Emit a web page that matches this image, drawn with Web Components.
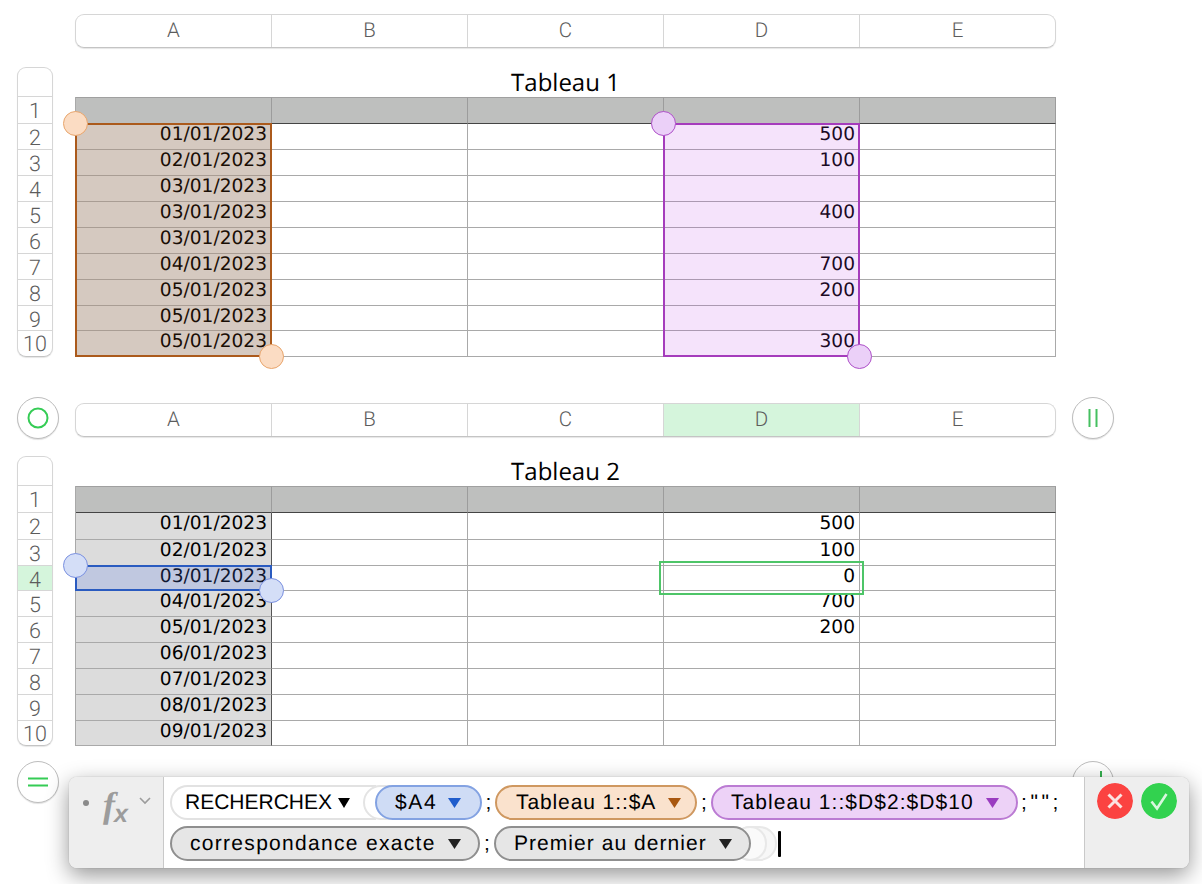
<!DOCTYPE html>
<html lang="fr">
<head>
<meta charset="utf-8">
<title>Tableau</title>
<style>
  html, body { margin: 0; padding: 0; background: #fff; }
  body { width: 1202px; height: 884px; overflow: hidden; text-rendering: geometricPrecision; }
</style>
</head>
<body>
<sheet-page></sheet-page>

<script>
const GREEN_TINT = "#d5f5dc";
const ROWS_1 = [27, 26, 26, 26, 26, 26, 26, 26, 25, 26];
const ROWS_2 = [27, 27, 26, 25, 26, 26, 26, 26, 26, 25];

class ColHeader extends HTMLElement {
  constructor() {
    super();
    this.attachShadow({ mode: "open" });
    const active = this.getAttribute("active");
    const cells = ["A", "B", "C", "D", "E"]
      .map((c) => `<div class="cell ${c === active ? "on" : ""}">${c}</div>`)
      .join("");
    this.shadowRoot.innerHTML = `
      <style>
        :host { display: block; height: 34px; }
        .bar {
          display: grid;
          grid-template-columns: 196px 196px 196px 196px 1fr;
          height: 100%;
          box-sizing: border-box;
          border: 1px solid #d6d6d6;
          border-bottom-color: #c4c4c4;
          border-radius: 9px;
          overflow: hidden;
          box-shadow: 0 1px 1px rgba(0,0,0,0.1);
          background: #fff;
        }
        .cell {
          font: 300 20.5px/33px Roboto, "Liberation Sans", sans-serif;
          color: #5c5c5c;
          text-align: center;
          border-right: 1px solid #d6d6d6;
        }
        .cell:last-child { border-right: 0; }
        .on { background: ${GREEN_TINT}; }
      </style>
      <div class="bar">${cells}</div>
    `;
  }
}

class RowHeader extends HTMLElement {
  constructor() {
    super();
    this.attachShadow({ mode: "open" });
    const active = Number(this.getAttribute("active"));
    const rows = JSON.parse(this.getAttribute("rows"));
    // the box border takes the last pixel, so the last row is one shorter
    const cells = rows
      .map((h, i) => {
        const height = i === rows.length - 1 ? h - 1 : h;
        return `<div class="row ${i + 1 === active ? "on" : ""}" style="height:${height}px">${i + 1}</div>`;
      })
      .join("");
    this.shadowRoot.innerHTML = `
      <style>
        :host { display: block; width: 36px; }
        .box {
          box-sizing: border-box;
          height: 290px;
          border: 1px solid #d6d6d6;
          border-bottom-color: #c4c4c4;
          border-radius: 9px;
          overflow: hidden;
          box-shadow: 0 1px 1px rgba(0,0,0,0.1);
          background: #fff;
        }
        .blank { height: 28px; border-bottom: 1px solid #d6d6d6; }
        .row {
          box-sizing: border-box;
          padding-top: 4px;
          font: 300 21.5px/21px Roboto, "Liberation Sans", sans-serif;
          color: #5c5c5c;
          text-align: center;
          border-bottom: 1px solid #d6d6d6;
        }
        .row:last-child { border-bottom: 0; padding-top: 3px; }
        .on { background: ${GREEN_TINT}; }
      </style>
      <div class="box"><div class="blank"></div>${cells}</div>
    `;
  }
}

class SheetTable extends HTMLElement {
  constructor() {
    super();
    this.attachShadow({ mode: "open" });
    const rows = JSON.parse(this.getAttribute("rows"));
    const colA = JSON.parse(this.getAttribute("col-a"));
    const colD = JSON.parse(this.getAttribute("col-d"));
    let cells = "";
    rows.forEach((h, r) => {
      for (let c = 0; c < 5; c++) {
        let text = "";
        let cls = r === 0 ? "cell head" : "cell";
        if (r > 0 && c === 0) { text = colA[r - 1] || ""; cls += " shade"; }
        if (r > 0 && c === 3) { text = colD[r - 1] || ""; }
        cells += `<div class="${cls}" style="height:${h}px">${text}</div>`;
      }
    });
    this.shadowRoot.innerHTML = `
      <style>
        :host { display: block; position: relative; height: 290px; }
        .title {
          height: 30px;
          padding-top: 1px;
          box-sizing: border-box;
          font: 24px/29px "Open Sans", sans-serif;
          color: #000;
          text-align: center;
          white-space: nowrap;
        }
        .grid {
          display: grid;
          grid-template-columns: repeat(5, 196px);
          width: 981px;
          box-sizing: border-box;
          border-left: 1px solid #a9a9a9;
        }
        .cell {
          box-sizing: border-box;
          border-right: 1px solid #a9a9a9;
          border-bottom: 1px solid #a9a9a9;
          padding-right: 4px;
          text-align: right;
          font: 18.6px/21px "DejaVu Sans", sans-serif;
          color: #000;
          white-space: nowrap;
        }
        .head {
          background: #bebfbe;
          border-top: 1px solid #a0a0a0;
          border-right-color: #9c9c9c;
          border-bottom-color: #444;
        }
        .shade { background: #dcdcdc; border-right-color: var(--shade-line, #a9a9a9); }
      </style>
      <div class="title">${this.getAttribute("name")}</div>
      <div class="grid">${cells}</div>
      <slot></slot>
    `;
  }
}

// colored range laid over the cells, with optional round handles
class RangeMark extends HTMLElement {
  constructor() {
    super();
    this.attachShadow({ mode: "open" });
    const handles = this.hasAttribute("handles")
      ? `<i class="h tl"></i><i class="h br"></i>` : "";
    this.shadowRoot.innerHTML = `
      <style>
        :host {
          position: absolute;
          box-sizing: border-box;
          border: 2px solid var(--line);
          background: var(--fill);
        }
        .h {
          position: absolute;
          box-sizing: border-box;
          width: 25px;
          height: 25px;
          border-radius: 50%;
          border: 1.5px solid var(--knob-line);
          background: var(--knob);
        }
        .tl { left: -14px; top: -14px; }
        .br { right: -14px; bottom: -14px; }
      </style>
      ${handles}
    `;
  }
}

class RoundBtn extends HTMLElement {
  constructor() {
    super();
    this.attachShadow({ mode: "open" });
    const icons = {
      circle: `<circle cx="21" cy="21" r="9.5" fill="none" stroke="#35cc55" stroke-width="2"/>`,
      bars: `<path d="M17.5 12v18M24.5 12v18" stroke="#45c060" stroke-width="2" fill="none"/>`,
      equal: `<path d="M11 17.5h20M11 24.5h20" stroke="#35cc55" stroke-width="2" fill="none"/>`,
      plus: `<path d="M29 10v8" stroke="#35b050" stroke-width="2" fill="none"/>`
    };
    this.shadowRoot.innerHTML = `
      <style>
        :host { display: block; width: 42px; height: 42px; }
        .b {
          box-sizing: border-box;
          width: 42px;
          height: 42px;
          border: 1px solid #bdbdbd;
          border-radius: 50%;
          background: #fff;
          box-shadow: 0 1px 1px rgba(0,0,0,0.12);
        }
        svg { display: block; margin: -1px; }
      </style>
      <div class="b"><svg width="42" height="42" viewBox="0 0 42 42">${icons[this.getAttribute("icon")]}</svg></div>
    `;
  }
}

class FormulaToken extends HTMLElement {
  constructor() {
    super();
    this.attachShadow({ mode: "open" });
    const tones = {
      blue: ["#cfdcf5", "#83a2e2", "#1f5ccc"],
      orange: ["#fae2cd", "#cf9860", "#a8570f"],
      purple: ["#edd2f7", "#bb7bd3", "#9a3cc0"],
      gray: ["#e6e6e6", "#8f8f8f", "#222"]
    };
    const t = tones[this.getAttribute("tone")];
    this.shadowRoot.innerHTML = `
      <style>
        :host {
          display: flex;
          align-items: center;
          box-sizing: border-box;
          height: 35px;
          position: relative;
          flex: none;
          background: ${t[0]};
          border: 2px solid ${t[1]};
          border-radius: 18px;
          font: 21px/31px "Liberation Sans", sans-serif;
          letter-spacing: 1px;
          color: #000;
          white-space: nowrap;
        }
        svg { display: block; flex: none; }
      </style>
      <slot></slot>
      <svg width="13" height="10" viewBox="0 0 13 10"><path d="M0 0h13L6.5 10z" fill="${t[2]}"/></svg>
    `;
  }
}

class FormulaBar extends HTMLElement {
  constructor() {
    super();
    this.attachShadow({ mode: "open" });
    this.shadowRoot.innerHTML = `
      <style>
        :host {
          position: absolute;
          left: 69px;
          top: 777px;
          width: 1120px;
          height: 91px;
          display: flex;
          box-sizing: border-box;
          border-radius: 8px;
          overflow: hidden;
          background: #fff;
          box-shadow: 0 0 1px rgba(0,0,0,0.35), 0 7px 22px rgba(0,0,0,0.42);
          font: 21px/31px "Liberation Sans", sans-serif;
          color: #000;
        }
        .left {
          flex: none;
          width: 95px;
          box-sizing: border-box;
          background: #eee;
          border-right: 1px solid #c9c9c9;
          display: flex;
          align-items: flex-start;
          padding: 13px 0 0 14px;
        }
        .dot { width: 6px; height: 6px; border-radius: 50%; background: #8a8a8a; margin: 10px 14px 0 0; flex: none; }
        .fx {
          font: italic bold 36px/30px "Liberation Serif", serif;
          color: #9c9c9c;
          width: 36px;
          flex: none;
          white-space: nowrap;
        }
        .fx span { font: italic bold 25px/30px "Liberation Sans", sans-serif; margin-left: -1px; vertical-align: -5px; }
        .chev { margin-top: 7px; flex: none; }
        .main {
          flex: 1;
          display: flex;
          flex-direction: column;
          gap: 6px;
          padding: 8px 0 0 6px;
        }
        .line { display: flex; align-items: center; height: 35px; }
        .right {
          flex: none;
          width: 105px;
          box-sizing: border-box;
          background: #eee;
          border-left: 1px solid #c9c9c9;
          display: flex;
          gap: 8px;
          padding: 6px 0 0 12px;
          align-items: flex-start;
        }
        .go { width: 36px; height: 36px; border-radius: 50%; display: block; }
        .func {
          flex: none;
          box-sizing: border-box;
          height: 35px;
          width: 206px;
          border: 2px solid #e2e2e2;
          border-right: 0;
          border-radius: 18px 0 0 18px;
          padding-left: 13px;
          display: flex;
          align-items: center;
        }
        .func svg { margin-left: 6px; }
        .ring {
          flex: none;
          box-sizing: border-box;
          height: 35px;
          width: 44px;
          border: 2px solid #e4e4e4;
          border-radius: 18px;
          background: #fff;
        }
        .semi { flex: none; }
        .cursor { flex: none; width: 3px; height: 26px; background: #000; border-radius: 1px; }
        formula-token { position: relative; z-index: 1; }
      </style>
      <div class="left">
        <div class="dot"></div>
        <div class="fx">f<span>x</span></div>
        <svg class="chev" width="12" height="8" viewBox="0 0 12 8"><path d="M1 1l5 5 5-5" fill="none" stroke="#9c9c9c" stroke-width="1.6"/></svg>
      </div>
      <div class="main">
        <div class="line">
          <div class="func">RECHERCHEX<svg width="12" height="10" viewBox="0 0 12 10"><path d="M0 0h12L6 10z" fill="#000"/></svg></div>
          <div class="ring" style="margin-left:-13px"></div>
          <formula-token tone="blue" style="margin-left:-32px;width:107px;padding-left:18px;gap:11px;letter-spacing:1.6px">$A4</formula-token>
          <span class="semi" style="width:13px;text-align:center">;</span>
          <formula-token tone="orange" style="width:202px;padding-left:19px;gap:12px;letter-spacing:0.9px">Tableau 1::$A</formula-token>
          <span class="semi" style="width:14px;text-align:center">;</span>
          <formula-token tone="purple" style="width:307px;padding-left:18px;gap:12px;letter-spacing:1.05px">Tableau 1::$D$2:$D$10</formula-token>
          <span class="semi" style="margin-left:3px;letter-spacing:3.6px">;"";</span>
        </div>
        <div class="line">
          <formula-token tone="gray" style="width:310px;padding-left:18px;gap:12px;letter-spacing:1.3px">correspondance exacte</formula-token>
          <span class="semi" style="width:14px;text-align:center">;</span>
          <formula-token tone="gray" style="width:257px;padding-left:18px;gap:12px;letter-spacing:1.05px">Premier au dernier</formula-token>
          <div class="ring" style="margin-left:-18px;background:#f7f7f7;border-color:#e8e8e8"></div>
          <div class="ring" style="margin-left:-44px;width:34px;background:#fafafa;border-color:#e8e8e8"></div>
          <div class="cursor" style="margin-left:11px"></div>
        </div>
      </div>
      <div class="right">
        <svg class="go" viewBox="0 0 36 36"><circle cx="18" cy="18" r="18" fill="#fb4341"/><path d="M11.5 11.5l13 13M24.5 11.5l-13 13" stroke="#fbe3e0" stroke-width="3" fill="none"/></svg>
        <svg class="go" viewBox="0 0 36 36"><circle cx="18" cy="18" r="18" fill="#32d24f"/><path d="M10.5 18.5l5.5 7 9.5-14.5" stroke="#d8f7de" stroke-width="2.6" fill="none"/></svg>
      </div>
    `;
  }
}

class SheetPage extends HTMLElement {
  constructor() {
    super();
    this.attachShadow({ mode: "open" });
    const orange = "--line:#ab5a1c;--fill:rgba(176,96,32,0.15);--knob:#fbdcc3;--knob-line:#e8a56c;";
    const purple = "--line:#a53cbc;--fill:rgba(190,70,225,0.15);--knob:#ebd0f8;--knob-line:#ae50c8;";
    const blue = "--line:#2a5bc0;--fill:rgba(80,120,240,0.2);--knob:#d4def7;--knob-line:#7a90e0;";
    this.shadowRoot.innerHTML = `
      <style>
        :host { display: block; position: relative; width: 1202px; height: 884px; }
        .sheet {
          display: grid;
          grid-template-columns: 75px 981px 58px;
          grid-template-rows: 34px 290px;
          row-gap: 19px;
          justify-items: start;
        }
        .sheet col-header, .sheet sheet-table { grid-column: 2; width: 981px; }
        .sheet row-header { grid-column: 1; margin-left: 17px; }
        .sheet round-btn { margin-top: -6px; }
        .sheet .l { grid-column: 1; grid-row: 1; margin-left: 17px; }
        .sheet .r { grid-column: 3; grid-row: 1; margin-left: 16px; }
        .one { padding-top: 14px; }
        .two { padding-top: 46px; }
        .foot {
          display: grid;
          grid-template-columns: 75px 981px 58px;
          padding-top: 15px;
        }
        .foot .l { grid-column: 1; margin-left: 17px; }
        .foot .r { grid-column: 3; margin-left: 16px; }
      </style>
      <div class="sheet one">
        <col-header></col-header>
        <row-header rows='${JSON.stringify(ROWS_1)}'></row-header>
        <sheet-table name="Tableau 1" rows='${JSON.stringify(ROWS_1)}'
          col-a='["01/01/2023","02/01/2023","03/01/2023","03/01/2023","03/01/2023","04/01/2023","05/01/2023","05/01/2023","05/01/2023"]'
          col-d='["500","100","","400","","700","200","","300"]'>
          <range-mark handles style="${orange}left:0;top:56px;width:197px;height:234px"></range-mark>
          <range-mark handles style="${purple}left:588px;top:56px;width:197px;height:234px"></range-mark>
        </sheet-table>
      </div>
      <div class="sheet two">
        <round-btn class="l" icon="circle"></round-btn>
        <col-header active="D"></col-header>
        <round-btn class="r" icon="bars"></round-btn>
        <row-header active="4" rows='${JSON.stringify(ROWS_2)}'></row-header>
        <sheet-table name="Tableau 2" style="--shade-line:#555" rows='${JSON.stringify(ROWS_2)}'
          col-a='["01/01/2023","02/01/2023","03/01/2023","04/01/2023","05/01/2023","06/01/2023","07/01/2023","08/01/2023","09/01/2023"]'
          col-d='["500","100","0","700","200"]'>
          <range-mark handles style="${blue}left:0;top:109px;width:197px;height:26px"></range-mark>
          <range-mark style="--line:#4ec568;--fill:transparent;left:584px;top:105px;width:205px;height:34px"></range-mark>
        </sheet-table>
      </div>
      <div class="foot">
        <round-btn class="l" icon="equal"></round-btn>
        <round-btn class="r" icon="plus"></round-btn>
      </div>
      <formula-bar></formula-bar>
    `;
  }
}

customElements.define("col-header", ColHeader);
customElements.define("row-header", RowHeader);
customElements.define("sheet-table", SheetTable);
customElements.define("range-mark", RangeMark);
customElements.define("round-btn", RoundBtn);
customElements.define("formula-token", FormulaToken);
customElements.define("formula-bar", FormulaBar);
customElements.define("sheet-page", SheetPage);
</script>
</body>
</html>
